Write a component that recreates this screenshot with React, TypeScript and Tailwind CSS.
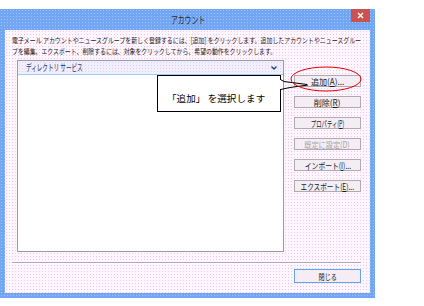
import React from "react";

const F = "font-['Noto_Sans_CJK_JP','Noto_Sans',sans-serif]";

function Btn({
  label,
  scale,
  disabled,
  primary,
  h,
}: {
  label: React.ReactNode;
  scale: string;
  disabled?: boolean;
  primary?: boolean;
  h?: string;
}) {
  return (
    <div
      className={`${h ?? "h-[12px]"} w-[67px] border ${
        primary ? "border-[#62a4ec]" : "border-[#b0aab0]"
      } bg-[#f4edf4] flex items-center justify-center`}
    >
      <span
        className={`inline-block whitespace-nowrap text-[8.5px] leading-none ${scale} ${
          disabled ? "text-[#a8a4a8]" : "text-[#1a1a1a]"
        }`}
      >
        {label}
      </span>
    </div>
  );
}

export default function App() {
  return (
    <div className={`relative w-[424px] h-[306px] bg-white overflow-hidden ${F}`}>
      {/* window */}
      <div className="mt-[9px] w-[375px] h-[289px] bg-[#72a5f2] bg-[radial-gradient(circle,#9cc6fb_0.7px,transparent_0.9px)] bg-[length:3px_3px] flex flex-col px-[5px] pb-[5px]">
        {/* title bar */}
        <div className="h-[21px] grid grid-cols-[1fr_auto_1fr]">
          <div />
          <div className="flex items-center justify-center">
            <span className="inline-block text-[10px] leading-none text-[#2a2a2a] scale-x-[0.68] whitespace-nowrap">
              アカウント
            </span>
          </div>
          <div className="flex justify-end items-start">
            <div className="w-[19px] h-[13px] bg-[#cc5252] flex items-center justify-center">
              <svg width="7" height="7" viewBox="0 0 7 7">
                <path d="M1 1 L6 6 M6 1 L1 6" stroke="#ffffff" strokeWidth="1.4" />
              </svg>
            </div>
          </div>
        </div>

        {/* client */}
        <div className="flex-1 flex flex-col bg-[#fdf6fd] bg-[radial-gradient(circle,#f2c2f2_0.7px,transparent_0.9px)] bg-[length:3px_3px] pt-[5px] pb-[10px]">
          <div className="pl-[7px] text-[7.2px] leading-[10.5px] text-[#1c1c1c]">
            <div className="w-[355px] overflow-visible">
              <div className="w-max whitespace-nowrap origin-left scale-x-[0.825]">
                電子メール アカウントやニュースグループを新しく登録するには、[追加] をクリックします。追加したアカウントやニュースグルー
              </div>
            </div>
            <div className="w-[355px] overflow-visible">
              <div className="w-max whitespace-nowrap origin-left scale-x-[0.82]">
                プを編集、エクスポート、削除するには、対象をクリックしてから、希望の動作をクリックします。
              </div>
            </div>
          </div>

          <div className="flex mt-[4px] pl-[12px]">
            {/* list */}
            <div className="w-[267px] h-[192px] border border-[#9c9aa4] bg-white flex flex-col">
              <div className="h-[14px] bg-[#eef0fb] bg-[radial-gradient(circle,#f0c8f4_0.7px,transparent_0.9px)] bg-[length:3px_3px] border-b border-[#a8c8f4] flex items-center pl-[8px] pr-[6px]">
                <span className="inline-block whitespace-nowrap origin-left scale-x-[0.62] text-[9px] leading-none text-[#26346a]">
                  ディレクトリ サービス
                </span>
                <div className="flex-1" />
                <svg width="6" height="4" viewBox="0 0 6 4">
                  <path d="M0.5 0.5 L3 3 L5.5 0.5" stroke="#1f3a8a" strokeWidth="1.3" fill="none" />
                </svg>
              </div>
            </div>

            {/* buttons */}
            <div className="ml-[10px] mt-[15px] flex flex-col gap-[9px]">
              <Btn
                scale="scale-x-[0.95]"
                label={
                  <>
                    追加(<u>A</u>)...
                  </>
                }
              />
              <Btn
                scale="scale-x-[0.95]"
                label={
                  <>
                    削除(<u>R</u>)
                  </>
                }
              />
              <Btn
                scale="scale-x-[0.63]"
                label={
                  <>
                    プロパティ(<u>P</u>)
                  </>
                }
              />
              <Btn
                disabled
                scale="scale-x-[0.84]"
                label={
                  <>
                    既定に設定(<u>D</u>)
                  </>
                }
              />
              <Btn
                scale="scale-x-[0.8]"
                label={
                  <>
                    インポート(<u>I</u>)...
                  </>
                }
              />
              <Btn
                scale="scale-x-[0.78]"
                label={
                  <>
                    エクスポート(<u>E</u>)...
                  </>
                }
              />
            </div>
          </div>

          {/* separator */}
          <div className="ml-[7px] mt-[10px] w-[349px] h-[2px] border-t border-[#b4a8b8] bg-white" />

          <div className="flex justify-end pr-[9px] mt-[5px]">
            <Btn primary h="h-[14px]" scale="scale-x-[0.72]" label={<>閉じる</>} />
          </div>
        </div>
      </div>

      {/* callout */}
      <div className="absolute left-[157px] top-[75px] w-[124px] h-[37px] border border-black bg-white pl-[9px] pt-[7px]">
        <span className="whitespace-nowrap text-[9.5px] leading-none text-black tracking-[0.1px]">
          「追加」 を選択します
        </span>
      </div>
      <svg className="absolute left-0 top-0 pointer-events-none" width="424" height="306">
        <line x1="280.5" y1="80" x2="280.5" y2="89" stroke="#ffffff" strokeWidth="1.5" />
        <polyline points="280.5,79.5 284,81.5 307,84.5" fill="none" stroke="#000" strokeWidth="1" />
        <polyline points="280.5,89.5 290,87.5 308,85" fill="none" stroke="#000" strokeWidth="1" />
        <ellipse cx="326" cy="79" rx="35" ry="12" fill="none" stroke="#e00000" strokeWidth="1" />
      </svg>
    </div>
  );
}
